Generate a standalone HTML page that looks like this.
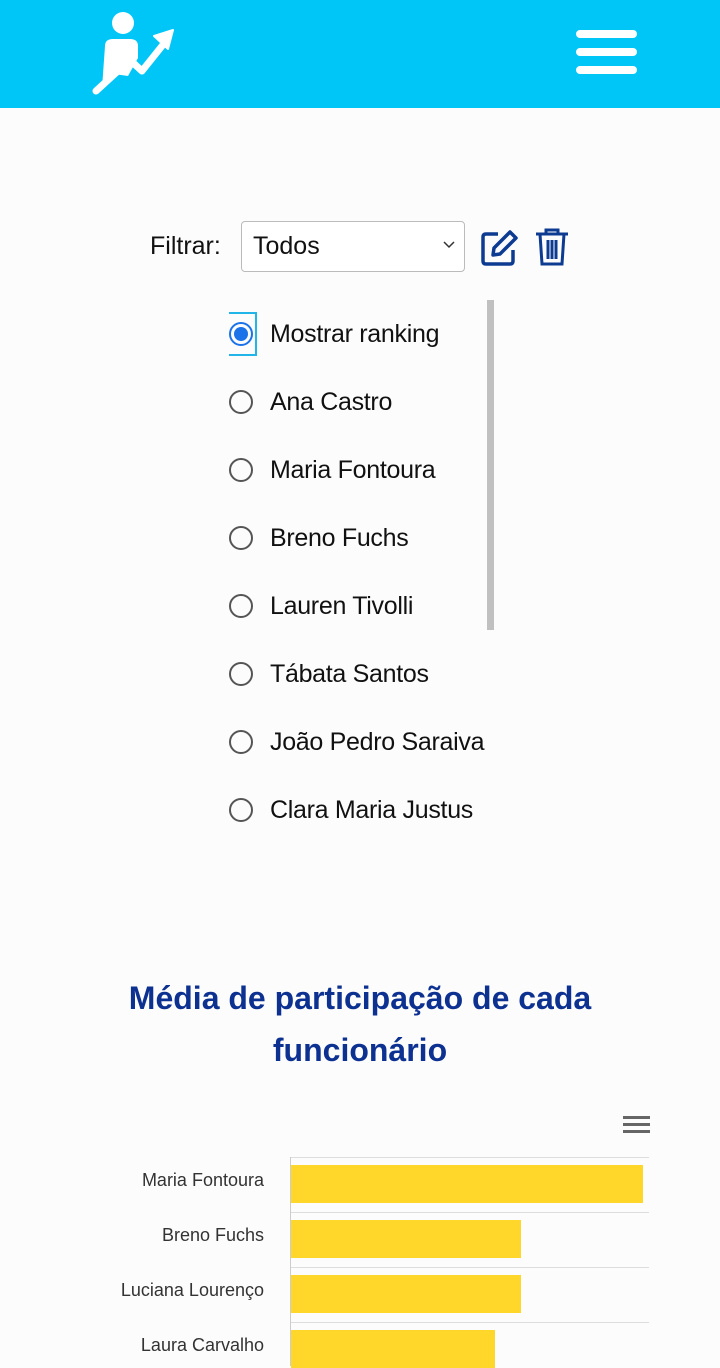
<!DOCTYPE html>
<html><head><meta charset="utf-8"><style>
body{margin:0;width:720px;height:1366px;background:#fcfcfc;font-family:"Liberation Sans","DejaVu Sans",sans-serif;position:relative;overflow:hidden}
.hdr{position:absolute;left:0;top:0;width:720px;height:108px;background:#00c6f8}
.abs{position:absolute}
.t{font-size:25px;color:#111}
.r{position:absolute;left:229px;width:24px;height:24px;border:2px solid #555;border-radius:50%;box-sizing:border-box}
.n{position:absolute;left:270px;font-size:25px;color:#111;letter-spacing:-0.3px}
.bar{position:absolute;left:291px;height:38px;background:#fed72a}
.lbl{position:absolute;right:456px;font-size:18px;color:#333}
.gl{position:absolute;left:291px;width:358px;height:1px;background:#ddd}
</style></head><body>
<div class="hdr">
<svg class="abs" style="left:90px;top:8px" width="90" height="88" viewBox="0 0 90 88">
<circle cx="33" cy="15" r="11" fill="#fff"/>
<path d="M15 38 Q15 31 23 31 H40 Q48 31 48 38 V50 L38 68 L24 66 L12 80 Z" fill="#fff"/>
<path d="M6 83 L40 52 L52 63 L76 33" stroke="#fff" stroke-width="7" fill="none" stroke-linecap="round" stroke-linejoin="round"/>
<path d="M83 22 L64 28 L78 41 Z" fill="#fff" stroke="#fff" stroke-width="2" stroke-linejoin="round"/>
</svg>
<div class="abs" style="left:576px;top:30px;width:61px;height:8px;background:#fff;border-radius:4px"></div>
<div class="abs" style="left:576px;top:48px;width:61px;height:8px;background:#fff;border-radius:4px"></div>
<div class="abs" style="left:576px;top:66px;width:61px;height:8px;background:#fff;border-radius:4px"></div>
</div>
<div class="abs t" style="left:150px;top:232px">Filtrar:</div>
<div class="abs" style="left:241px;top:221px;width:224px;height:51px;border:1px solid #bbb;border-radius:4px;box-sizing:border-box;background:#fff"></div>
<div class="abs t" style="left:253px;top:232px">Todos</div>
<svg class="abs" style="left:442px;top:240px" width="14" height="10"><path d="M2 2 L7 7 L12 2" stroke="#333" stroke-width="1.5" fill="none"/></svg>
<svg class="abs" style="left:480px;top:228px" width="40" height="40" viewBox="0 0 40 40"><path d="M18 6 H6 Q3 6 3 9 V33 Q3 36 6 36 H30 Q33 36 33 33 V22" stroke="#0d3b91" stroke-width="3.5" fill="none"/><path d="M30 4 L36 10 L20 26 L13 27 L14 20 Z" stroke="#0d3b91" stroke-width="3.5" fill="none" stroke-linejoin="round"/></svg>
<svg class="abs" style="left:533px;top:226px" width="38" height="42" viewBox="0 0 38 42"><path d="M3 8 H35 M13 8 V4 H25 V8 M7 8 L9 38 H29 L31 8 M15 14 V33 M19 14 V33 M23 14 V33" stroke="#0d3b91" stroke-width="3" fill="none"/></svg>
<div class="abs" style="left:229px;top:312px;width:28px;height:44px;border:2px solid #22b5e8;border-left:none;box-sizing:border-box"></div>
<div class="r" style="top:322px;border-color:#1a73e8"><div style="position:absolute;left:3px;top:3px;width:14px;height:14px;border-radius:50%;background:#1a73e8"></div></div>
<div class="n" style="top:320px">Mostrar ranking</div>
<div class="r" style="top:390px"></div><div class="n" style="top:388px">Ana Castro</div>
<div class="r" style="top:458px"></div><div class="n" style="top:456px">Maria Fontoura</div>
<div class="r" style="top:526px"></div><div class="n" style="top:524px">Breno Fuchs</div>
<div class="r" style="top:594px"></div><div class="n" style="top:592px">Lauren Tivolli</div>
<div class="r" style="top:662px"></div><div class="n" style="top:660px">Tábata Santos</div>
<div class="r" style="top:730px"></div><div class="n" style="top:728px">João Pedro Saraiva</div>
<div class="r" style="top:798px"></div><div class="n" style="top:796px">Clara Maria Justus</div>
<div class="abs" style="left:487px;top:300px;width:7px;height:330px;background:#c0c0c0"></div>
<div class="abs" style="left:0;top:972px;width:720px;text-align:center;font-size:32px;font-weight:bold;color:#0d3191;line-height:52px">Média de participação de cada<br>funcionário</div>
<div class="abs" style="left:623px;top:1116px;width:27px;height:3px;background:#666"></div>
<div class="abs" style="left:623px;top:1123px;width:27px;height:3px;background:#666"></div>
<div class="abs" style="left:623px;top:1130px;width:27px;height:3px;background:#666"></div>
<div class="gl" style="top:1157px"></div><div class="gl" style="top:1212px"></div><div class="gl" style="top:1267px"></div><div class="gl" style="top:1322px"></div>
<div class="abs" style="left:290px;top:1157px;width:1px;height:209px;background:#ccc"></div>
<div class="bar" style="top:1165px;width:352px"></div>
<div class="bar" style="top:1220px;width:230px"></div>
<div class="bar" style="top:1275px;width:230px"></div>
<div class="bar" style="top:1330px;width:204px"></div>
<div class="lbl" style="top:1170px">Maria Fontoura</div>
<div class="lbl" style="top:1225px">Breno Fuchs</div>
<div class="lbl" style="top:1280px">Luciana Lourenço</div>
<div class="lbl" style="top:1335px">Laura Carvalho</div>
</body></html>
